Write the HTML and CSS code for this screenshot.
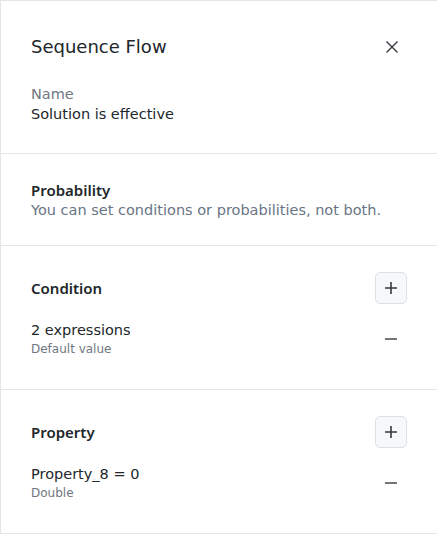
FILE: index.html
```
<!DOCTYPE html>
<html>
<head>
<meta charset="utf-8">
<link rel="stylesheet" href="styles.css">
</head>
<body>
<div class="panel">
  <section class="sec sec-head">
    <div class="title-row">
      <h1 class="title">Sequence Flow</h1>
      <button class="close" aria-label="Close">
        <svg width="14" height="14" viewBox="0 0 14 14"><path d="M1.5 1.5 L12.5 12.5 M12.5 1.5 L1.5 12.5" stroke="#343a3f" stroke-width="1.4" fill="none"/></svg>
      </button>
    </div>
    <div class="field">
      <div class="label">Name</div>
      <div class="value">Solution is effective</div>
    </div>
  </section>
  <section class="sec sec-prob">
    <div class="heading">Probability</div>
    <div class="desc">You can set conditions or probabilities, not both.</div>
  </section>
  <section class="sec sec-list">
    <div class="list-head">
      <div class="heading">Condition</div>
      <button class="add" aria-label="Add">
        <svg width="14" height="14" viewBox="0 0 14 14"><path d="M7 1 V13 M1 7 H13" stroke="#343a3f" stroke-width="1.6" fill="none"/></svg>
      </button>
    </div>
    <div class="item">
      <div class="item-text">
        <div class="item-main">2 expressions</div>
        <div class="item-sub">Default value</div>
      </div>
      <button class="remove" aria-label="Remove">
        <svg width="14" height="4" viewBox="0 0 14 4"><path d="M1 2 H13" stroke="#4d5358" stroke-width="1.6" fill="none"/></svg>
      </button>
    </div>
  </section>
  <section class="sec sec-list last">
    <div class="list-head">
      <div class="heading">Property</div>
      <button class="add" aria-label="Add">
        <svg width="14" height="14" viewBox="0 0 14 14"><path d="M7 1 V13 M1 7 H13" stroke="#343a3f" stroke-width="1.6" fill="none"/></svg>
      </button>
    </div>
    <div class="item">
      <div class="item-text">
        <div class="item-main">Property_8 = 0</div>
        <div class="item-sub">Double</div>
      </div>
      <button class="remove" aria-label="Remove">
        <svg width="14" height="4" viewBox="0 0 14 4"><path d="M1 2 H13" stroke="#4d5358" stroke-width="1.6" fill="none"/></svg>
      </button>
    </div>
  </section>
</div>
</body>
</html>
```
FILE: styles.css
```
* { box-sizing: border-box; }
html, body { margin: 0; padding: 0; background: #ffffff; }
body {
  font-family: "DejaVu Sans", "Noto Sans", sans-serif;
  color: #21272a;
  -webkit-font-smoothing: antialiased;
}
.panel {
  width: 437px;
  height: 534px;
  border-left: 1px solid #e2e5e9;
  border-top: 1px solid #e2e5e9;
  border-bottom: 1px solid #e2e5e9;
  display: flex;
  flex-direction: column;
}
.sec {
  padding: 0 30px 0 30px;
  border-bottom: 1px solid #e2e5e9;
}
.sec.last { border-bottom: none; flex: 1; }
.sec-head { padding-top: 31px; height: 153px; }
.title-row {
  display: flex;
  align-items: center;
  justify-content: space-between;
  height: 30px;
}
.title {
  margin: 0;
  font-size: 18px;
  font-weight: 400;
  line-height: 30px;
  color: #21272a;
}
.close {
  width: 32px;
  height: 32px;
  border: none;
  background: none;
  padding: 0;
  margin-right: -1px;
  display: flex;
  align-items: center;
  justify-content: center;
}
.field { margin-top: 22px; }
.label {
  font-size: 14.5px;
  line-height: 20px;
  color: #6f7781;
}
.value {
  font-size: 14.5px;
  line-height: 20px;
  color: #21272a;
}
.sec-prob { padding-top: 26px; height: 92px; }
.heading {
  font-family: "Noto Sans", "DejaVu Sans", sans-serif;
  font-size: 15px;
  font-weight: 600;
  line-height: 20px;
  color: #21272a;
}
.desc {
  font-size: 14.5px;
  line-height: 20px;
  color: #697585;
}
.sec-list { padding-top: 26px; height: 144px; }
.list-head {
  display: flex;
  align-items: center;
  justify-content: space-between;
  height: 32px;
}
.add {
  width: 32px;
  height: 32px;
  border: 1px solid #dde1e6;
  border-radius: 5px;
  background: #f6f8fa;
  padding: 0;
  margin-right: 0;
  display: flex;
  align-items: center;
  justify-content: center;
}
.item {
  margin-top: 16px;
  display: flex;
  align-items: center;
  justify-content: space-between;
}
.item-main {
  font-size: 14.5px;
  line-height: 20px;
  color: #21272a;
}
.item-sub {
  font-size: 12px;
  line-height: 18px;
  color: #6f7781;
}
.remove {
  width: 32px;
  height: 32px;
  border: none;
  background: none;
  padding: 0;
  display: flex;
  align-items: center;
  justify-content: center;
}
```
